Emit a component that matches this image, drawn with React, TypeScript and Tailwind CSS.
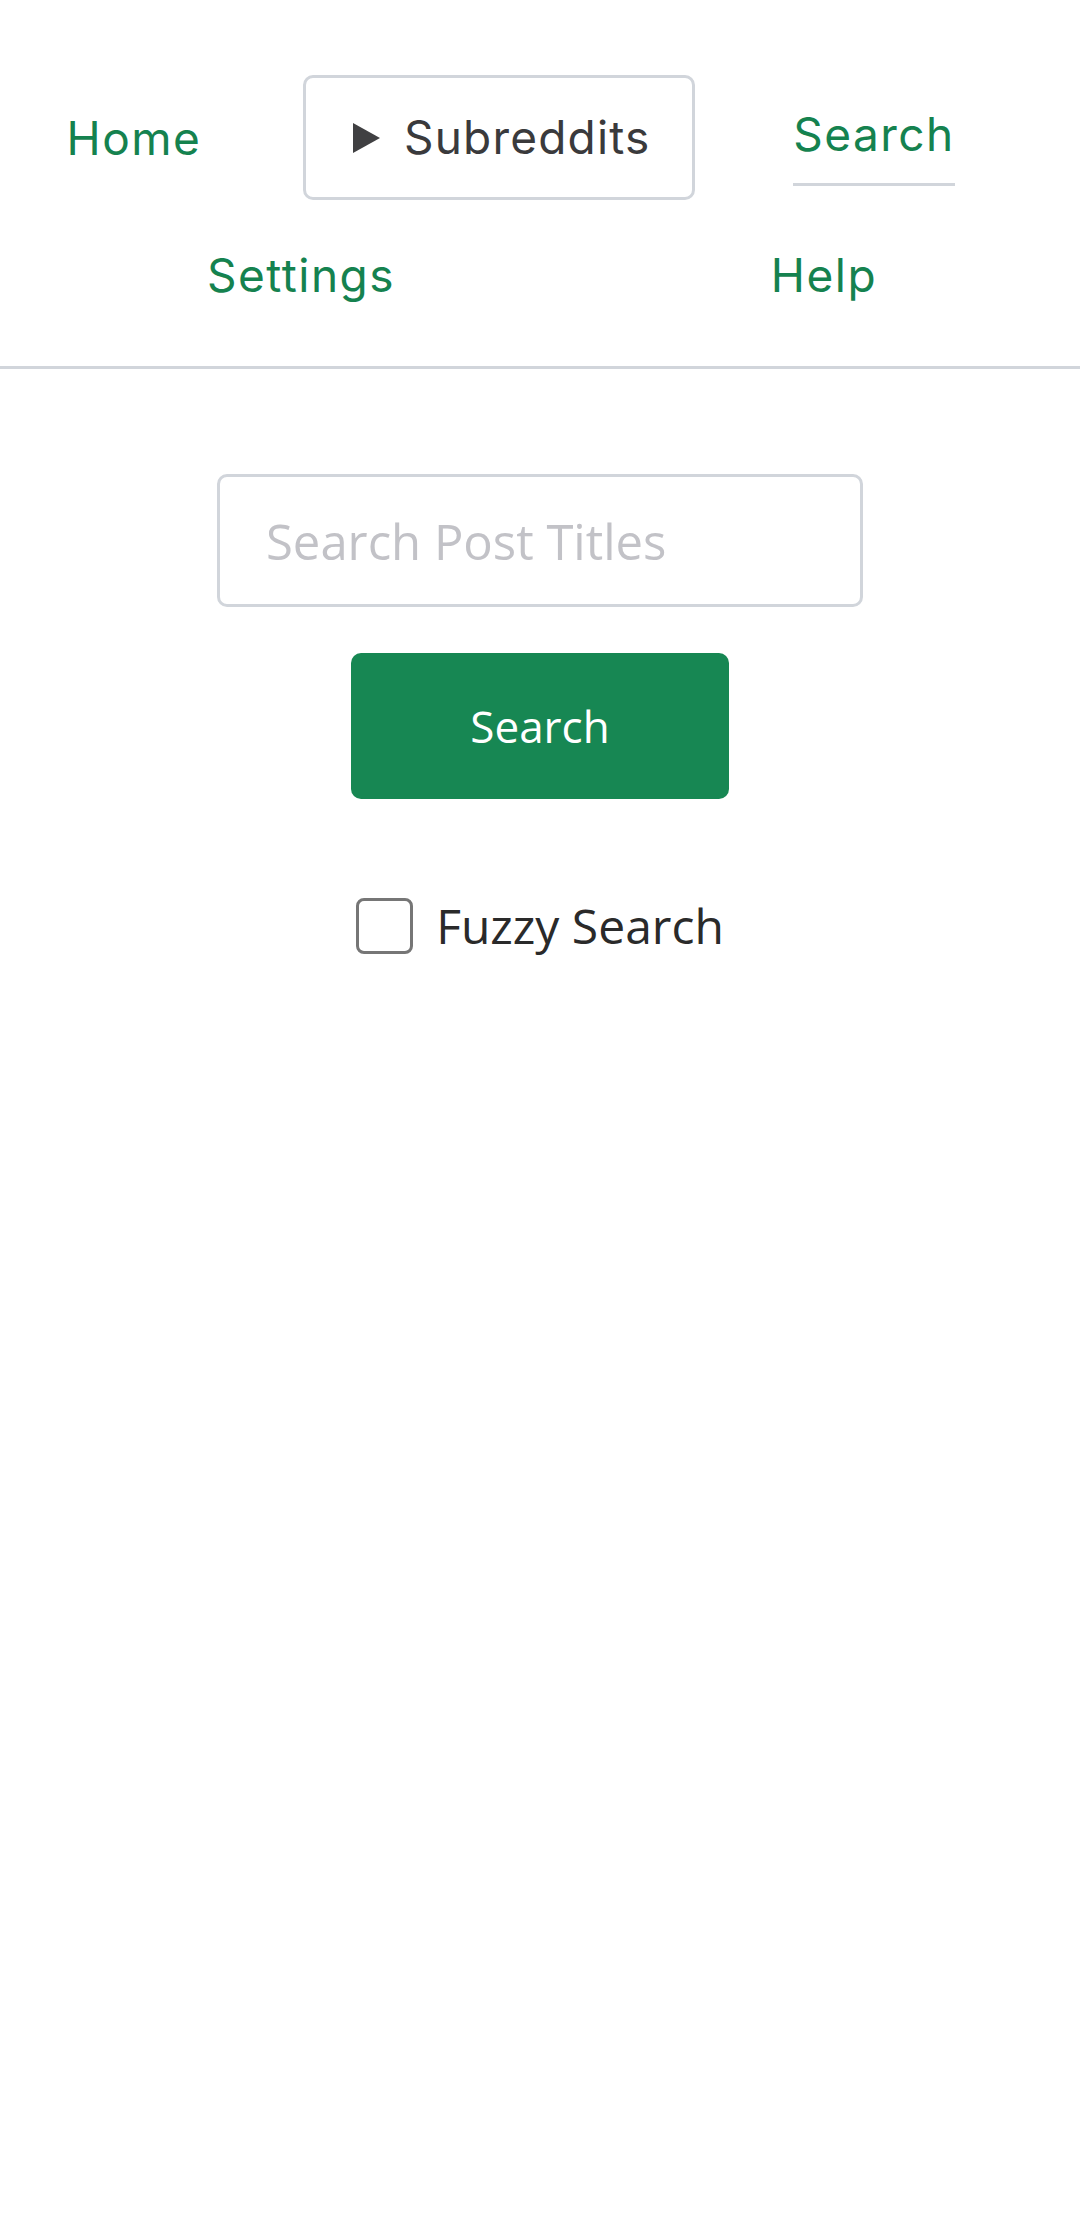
import { useState } from 'react'

const navFont = { fontFamily: 'Inter, "Noto Sans", sans-serif' }

const App = () => {
  const [query, setQuery] = useState('')
  const [fuzzy, setFuzzy] = useState(false)

  return (
    <div
      className="min-h-[2220px] w-[1080px] bg-white"
      style={{ fontFamily: '"Open Sans", "Noto Sans", sans-serif' }}
    >
      <nav className="border-b-[3px] border-[#d1d5db] pt-[75px] pb-[61px]" style={navFont}>
        <div className="flex h-[125px] items-center">
          <div className="flex w-[268px] justify-center">
            <a className="text-[46px] leading-[60px] tracking-[1.5px] text-[#15824f]">Home</a>
          </div>
          <details className="ml-[35px] h-[125px] w-[392px] rounded-[10px] border-[3px] border-[#d1d5db]">
            <summary className="flex h-full cursor-pointer list-none items-center pl-[47px] text-[46px] tracking-[1.2px] text-[#3a3a3c]">
              <svg width="27" height="30" viewBox="0 0 27 30" className="mr-[24px]">
                <path d="M0 0 L27 15 L0 30 Z" fill="#404042" />
              </svg>
              Subreddits
            </summary>
          </details>
          <div className="flex w-[358px] justify-center">
            <a className="border-b-[3px] border-[#d1d5db] pt-[15px] pb-[19px] text-[46px] leading-[60px] tracking-[1.5px] text-[#15824f]">
              Search
            </a>
          </div>
        </div>
        <div className="mt-[45px] flex h-[60px] items-center">
          <div className="flex w-[602px] justify-center">
            <a className="text-[46px] leading-[60px] tracking-[1.5px] text-[#15824f]">Settings</a>
          </div>
          <div className="flex w-[444px] justify-center">
            <a className="text-[46px] leading-[60px] tracking-[1.5px] text-[#15824f]">Help</a>
          </div>
        </div>
      </nav>

      <main className="flex flex-col items-center pt-[105px]">
        <input
          value={query}
          onChange={(e) => setQuery(e.target.value)}
          placeholder="Search Post Titles"
          className="h-[133px] w-[646px] rounded-[10px] border-[3px] border-[#d1d5db] px-[46px] text-[49px] text-[#222] outline-none placeholder:text-[#c2c2c7]"
        />
        <button className="mt-[46px] h-[146px] w-[378px] rounded-[10px] bg-[#178753] text-[44px] text-white">
          Search
        </button>
        <label className="mt-[97px] flex items-center gap-[23px]">
          <span
            onClick={() => setFuzzy(!fuzzy)}
            className="flex h-[56px] w-[57px] items-center justify-center rounded-[8px] border-[3px] border-[#767676] bg-white"
          >
            {fuzzy && (
              <svg width="36" height="36" viewBox="0 0 24 24">
                <path d="M4 12l5 5L20 6" stroke="#222" strokeWidth="3" fill="none" />
              </svg>
            )}
          </span>
          <span className="text-[48px] leading-[60px] text-[#2a2a2a]">Fuzzy Search</span>
        </label>
      </main>
    </div>
  )
}

export default App
